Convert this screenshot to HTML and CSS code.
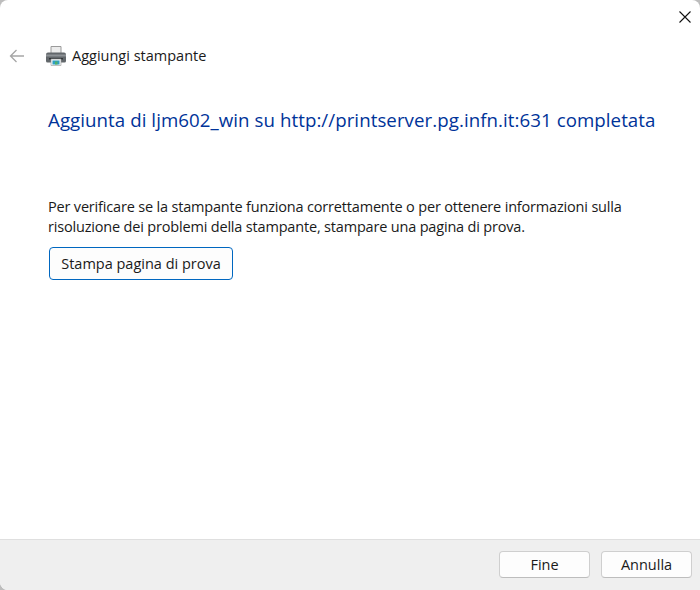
FILE: index.html
```html
<!DOCTYPE html>
<html lang="it">
<head>
<meta charset="utf-8">
<title>Aggiungi stampante</title>
<link rel="stylesheet" href="styles.css">
</head>
<body>
<div class="window">
  <div class="titlebar">
    <button class="close" aria-label="Chiudi">
      <svg width="14" height="14" viewBox="0 0 14 14"><path d="M1.500 1.500L12.500 12.500M12.500 1.500L1.500 12.500" stroke="#111" stroke-width="1.100" fill="none"/></svg>
    </button>
  </div>
  <div class="nav">
    <svg class="back" width="16" height="14" viewBox="0 0 16 14"><path d="M15 7H1.500M7.500 1L1.500 7L7.500 13" stroke="#a6a6a6" stroke-width="1.300" fill="none"/></svg>
    <svg class="printer" width="20" height="20" viewBox="0 0 20 20">
      <path d="M5 0.500h10v7H5z" fill="#ececec" stroke="#9a9a9a" stroke-width="1"/>
      <path d="M0 8.500q0-2 2-2h16q2 0 2 2v6.500q0 1.500-1.500 1.500h-17q-1.500 0-1.500-1.500z" fill="#62676b"/>
      <path d="M0 8.500h20v2H0z" fill="#8d9296"/>
      <path d="M3 12h14v1.500H3z" fill="#303437"/>
      <path d="M5 13h10v6.500H5z" fill="#f2f5f7" stroke="#9a9a9a" stroke-width=".6"/>
      <path d="M6.500 14.500h7v4h-7z" fill="#2e9fc4"/>
      <path d="M9 15.500h2.500v3H9z" fill="#4fb06a"/>
    </svg>
    <span class="nav-title">Aggiungi stampante</span>
  </div>
  <main class="content">
    <h1 class="heading">Aggiunta di ljm602_win su http://printserver.pg.infn.it:631 completata</h1>
    <p class="desc">Per verificare se la stampante funziona correttamente o per ottenere informazioni sulla risoluzione dei problemi della stampante, stampare una pagina di prova.</p>
    <button class="btn btn-test">Stampa pagina di prova</button>
  </main>
  <footer class="footer">
    <button class="btn btn-foot">Fine</button>
    <button class="btn btn-foot">Annulla</button>
  </footer>
</div>
</body>
</html>
```

FILE: styles.css
```css
html, body {
  margin: 0;
  padding: 0;
  width: 700px;
  height: 590px;
  overflow: hidden;
  background: #bdbdbd;
}
.window {
  width: 700px;
  height: 590px;
  background: #fff;
  border-radius: 8px 8px 0 8px;
  overflow: hidden;
  display: flex;
  flex-direction: column;
  font-family: "Open Sans", "Noto Sans", sans-serif;
  color: #1a1a1a;
}
.titlebar {
  height: 36px;
  display: flex;
  justify-content: flex-end;
  align-items: flex-start;
  flex: none;
}
.close {
  border: 0;
  background: none;
  padding: 0;
  margin: 10px 8px 0 0;
  width: 14px;
  height: 14px;
  display: block;
}
.close svg, .nav svg { display: block; }
.nav {
  height: 39px;
  display: flex;
  align-items: center;
  flex: none;
  padding-left: 9px;
}
.printer { margin-left: 21px; margin-right: 6px; }
.nav-title { font-size: 14.500px; }
.content {
  flex: 1;
  padding: 0 0 0 48px;
}
.heading {
  margin: 32px 0 0;
  font-size: 18.700px;
  font-weight: 400;
  color: #003399;
  line-height: 26px;
  white-space: nowrap;
  letter-spacing: 0.06px;
}
.desc {
  margin: 64px 0 0;
  width: 620px;
  font-size: 14.500px;
  line-height: 20px;
  letter-spacing: -0.18px;
}
.btn {
  font-family: inherit;
  font-size: 14.500px;
  color: #1a1a1a;
  padding: 0;
  background: #fdfdfd;
}
.btn-test {
  display: block;
  margin: 10px 0 0 1px;
  width: 184px;
  height: 33px;
  border: 1px solid #0067c0;
  border-radius: 4px;
}
.footer {
  height: 51px;
  flex: none;
  box-sizing: border-box;
  background: #efefef;
  border-top: 1px solid #dfdfdf;
  display: flex;
  justify-content: flex-end;
  gap: 11px;
  padding: 11px 8px 0 0;
}
.btn-foot {
  width: 91px;
  height: 27px;
  border: 1px solid #cfcfcf;
  border-bottom-color: #bdbdbd;
  border-radius: 4px;
}
```
